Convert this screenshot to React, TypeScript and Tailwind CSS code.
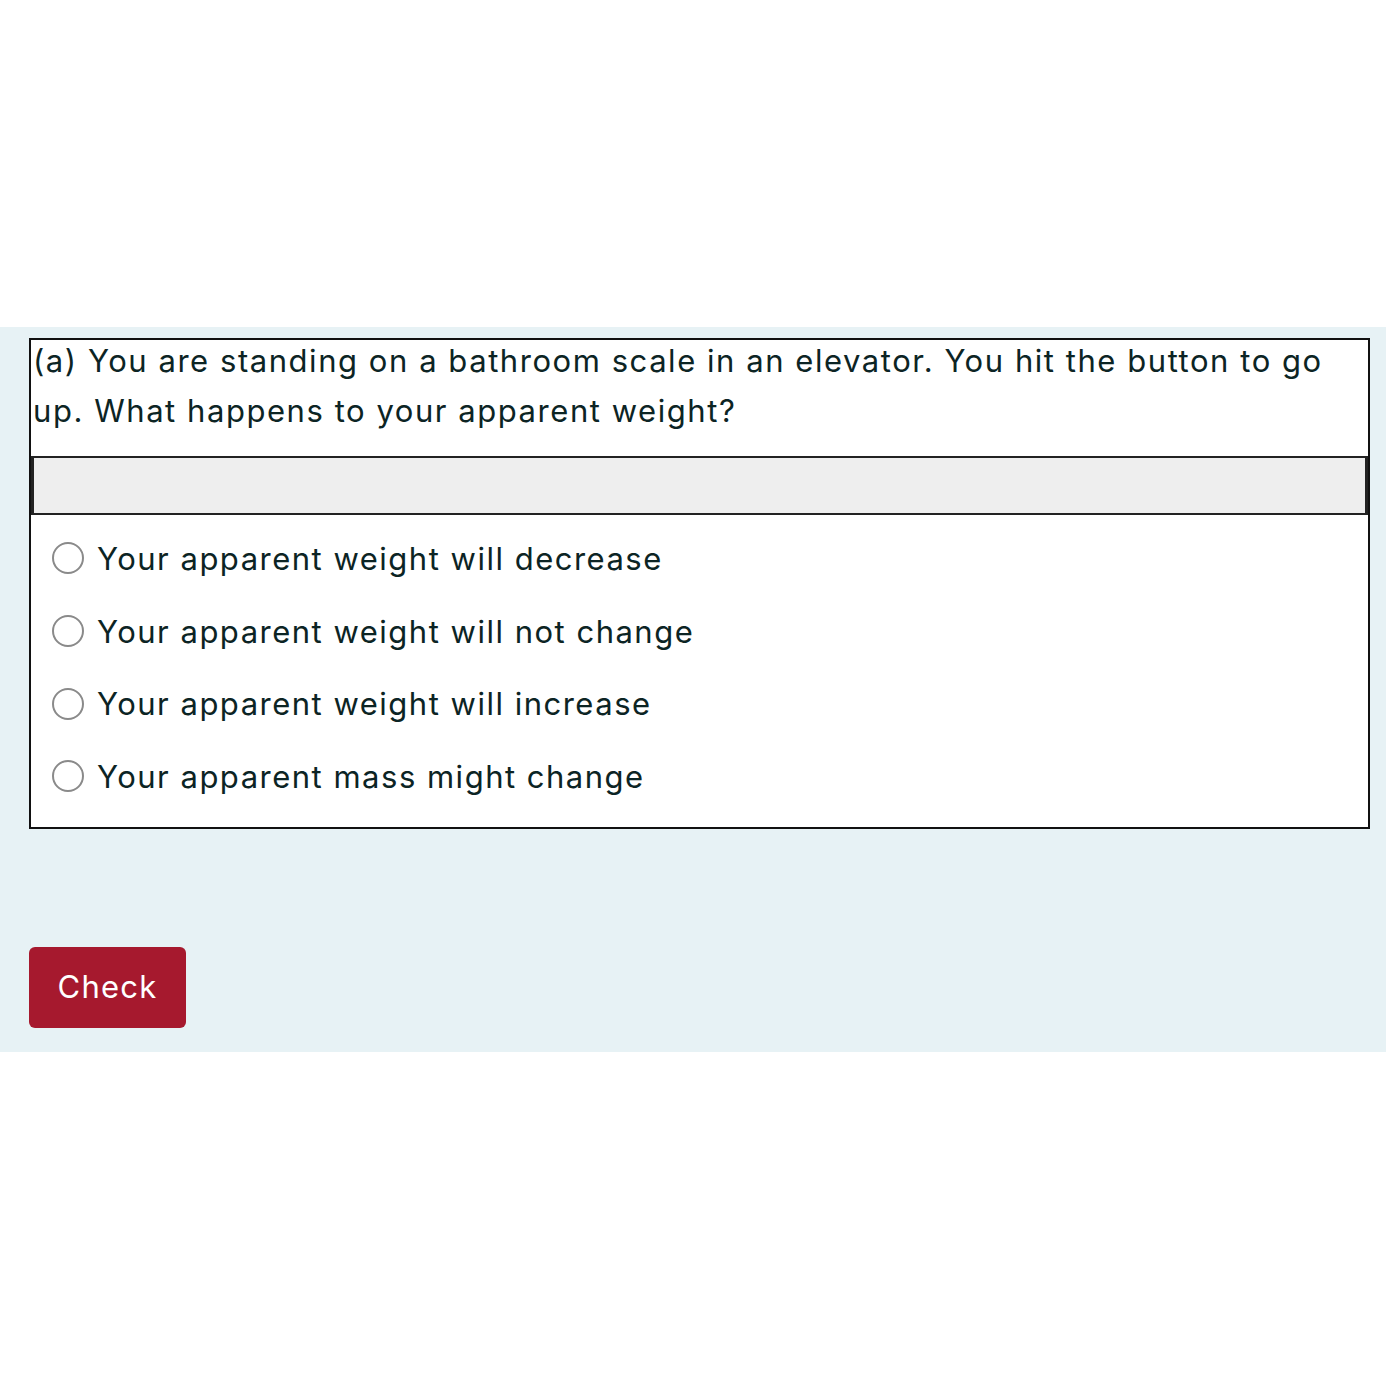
const options = [
  "Your apparent weight will decrease",
  "Your apparent weight will not change",
  "Your apparent weight will increase",
  "Your apparent mass might change",
];

export default function App() {
  return (
    <div className="min-h-[1386px] bg-white font-['Inter',sans-serif] text-[#0c2424]">
      <div className="h-[327px]" />
      <div className="bg-[#e7f2f5] pt-[11px] pb-[24px] pl-[29px] pr-[16px]">
        <div className="border-2 border-[#111] bg-white">
          <p className="-mt-[4px] px-[2px] text-[31px] leading-[50px] tracking-[1.55px]">
            (a) You are standing on a bathroom scale in an elevator. You hit the button to go
            <br />
            up. What happens to your apparent weight?
          </p>
          <div className="mt-[20px] h-[59px] bg-[#eeeeee] border-y-2 border-x-[3px] border-[#222]" />
          <div className="pt-[7px] pb-[14px] pl-[21px]">
            {options.map((o) => (
              <label key={o} className="flex items-center h-[72.7px] gap-[13px] cursor-pointer">
                <span className="w-[32px] h-[32px] rounded-full border-2 border-[#8a8a8a] bg-white shrink-0" />
                <span className="text-[31px] leading-none tracking-[1.5px]">{o}</span>
              </label>
            ))}
          </div>
        </div>
        <div className="h-[118px]" />
        <button className="w-[157px] h-[81px] rounded-[6px] bg-[#a6192e] text-white text-[31px] tracking-[1.2px]">
          Check
        </button>
      </div>
    </div>
  );
}
